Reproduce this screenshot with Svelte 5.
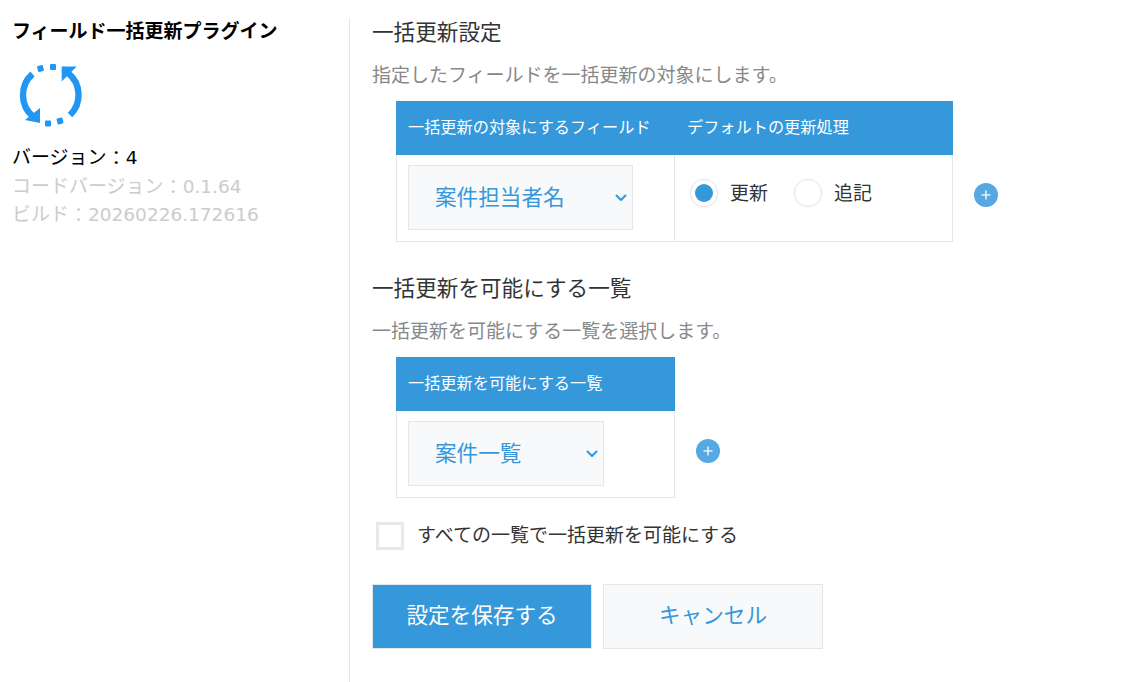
<script>
	// Plugin settings page: field bulk update
	let fieldRows = $state([{ name: '案件担当者名', mode: 'update' }]);
	let allViews = $state(false);
</script>

{#snippet chevron()}
	<svg class="chevron" width="12" height="8" viewBox="0 0 12 8" fill="none" stroke="#3498db" stroke-width="2" stroke-linecap="round" stroke-linejoin="round">
		<path d="M1.5 1.5 6 6l4.5-4.5" />
	</svg>
{/snippet}

{#snippet addButton()}
	<button class="add-btn" aria-label="追加">
		<svg width="24" height="24" viewBox="0 0 24 24">
			<circle cx="12" cy="12" r="12" fill="#55a8e2" />
			<path d="M12 7.5v9M7.5 12h9" stroke="#e4f1fa" stroke-width="1.6" />
		</svg>
	</button>
{/snippet}

<div class="page">
	<aside class="sidebar">
		<h3 class="plugin-name">フィールド一括更新プラグイン</h3>
		<svg class="logo" width="72" height="72" viewBox="14 59 72 72" fill="none">
			<g stroke="#2196f3" stroke-width="6.4">
				<path d="M32.5 74A28 28 0 0 0 33 116.5" />
				<path d="M70 115A28 28 0 0 0 68 73" />
			</g>
			<g fill="#2196f3">
				<path d="M40 108v15l-15-3z" />
				<path d="M61.7 66.5h15l-15 15z" />
				<rect x="37.5" y="65.5" width="6" height="6" rx="1" transform="rotate(-15 40.5 68.5)" />
				<rect x="50" y="64" width="6" height="6" rx="1" />
				<rect x="45" y="120.5" width="6" height="6" rx="1" />
				<rect x="57" y="118" width="6" height="6" rx="1" transform="rotate(-15 60 121)" />
			</g>
		</svg>
		<div class="version">バージョン<span class="colon">：</span><span class="num">4</span></div>
		<div class="version muted">コードバージョン<span class="colon">：</span><span class="num">0.1.64</span></div>
		<div class="version muted">ビルド<span class="colon">：</span><span class="num">20260226.172616</span></div>
	</aside>

	<main class="content">
		<section class="block">
			<h3 class="block-title">一括更新設定</h3>
			<p class="block-desc">指定したフィールドを一括更新の対象にします。</p>
			<div class="table-row">
				<table class="settings">
					<thead>
						<tr>
							<th class="col-field">一括更新の対象にするフィールド</th>
							<th>デフォルトの更新処理</th>
						</tr>
					</thead>
					<tbody>
						{#each fieldRows as row}
							<tr>
								<td class="first">
									<div class="select wide">
										<span>{row.name}</span>
										{@render chevron()}
									</div>
								</td>
								<td class="radio-cell">
									<div class="radios">
										<span class="radio on"></span>
										<span class="radio-label">更新</span>
										<span class="radio"></span>
										<span class="radio-label">追記</span>
									</div>
								</td>
							</tr>
						{/each}
					</tbody>
				</table>
				{@render addButton()}
			</div>
		</section>

		<section class="block">
			<h3 class="block-title">一括更新を可能にする一覧</h3>
			<p class="block-desc">一括更新を可能にする一覧を選択します。</p>
			<div class="table-row">
				<table class="settings narrow">
					<thead>
						<tr><th>一括更新を可能にする一覧</th></tr>
					</thead>
					<tbody>
						<tr>
							<td class="first">
								<div class="select">
									<span>案件一覧</span>
									{@render chevron()}
								</div>
							</td>
						</tr>
					</tbody>
				</table>
				{@render addButton()}
			</div>
		</section>

		<label class="check">
			<span class="box" class:on={allViews}></span>
			<span class="check-label">すべての一覧で一括更新を可能にする</span>
		</label>

		<div class="actions">
			<button class="btn save">設定を保存する</button>
			<button class="btn cancel">キャンセル</button>
		</div>
	</main>
</div>

<style>
	:global(body) {
		background: #fff;
		color: #333;
		font-family: "DejaVu Sans", "Noto Sans CJK JP", sans-serif;
		font-size: 19px;
	}

	.page {
		display: flex;
		box-sizing: border-box;
		min-height: 100vh;
	}

	.sidebar {
		box-sizing: border-box;
		width: 350px;
		margin-top: 18px;
		padding-left: 12px;
		border-right: 1px solid #e3e7e8;
	}

	.plugin-name {
		margin: -1px 0 0;
		color: #000;
		font-size: 19px;
		font-weight: 700;
		line-height: 28px;
	}

	.logo {
		display: block;
		margin: 14px 0 12px 2px;
	}

	.version {
		color: #000;
		line-height: 28.5px;
	}

	.num {
		font-size: 18.5px;
		line-height: 1;
	}

	.colon {
		line-height: 1;
		vertical-align: -1px;
	}

	.muted {
		color: #ccc;
	}

	.content {
		flex: 1;
		padding: 17px 0 0 22px;
	}

	.block {
		margin-bottom: 31px;
	}

	.block-title {
		margin: 0;
		color: #333;
		font-size: 21.6px;
		font-weight: 400;
		line-height: 32px;
	}

	.block-desc {
		margin: 12px 0;
		color: #888;
		line-height: 28px;
	}

	.table-row {
		display: flex;
		align-items: flex-end;
		padding-left: 24px;
	}

	.settings {
		border-collapse: separate;
		border-spacing: 0;
		table-layout: fixed;
		width: 557px;
	}

	.settings.narrow {
		width: 279px;
	}

	.settings th {
		box-sizing: border-box;
		height: 54px;
		padding: 0 12px 5px;
		background: #3498db;
		color: #fff;
		font-size: 16.2px;
		font-weight: 400;
		text-align: left;
		white-space: nowrap;
	}

	.col-field {
		width: 279px;
	}

	.settings td {
		box-sizing: border-box;
		height: 87px;
		padding: 10px 0 0 0;
		border-right: 1px solid #e3e7e8;
		border-bottom: 1px solid #e3e7e8;
		vertical-align: top;
	}

	.settings td.first {
		padding-left: 11px;
		border-left: 1px solid #e3e7e8;
	}

	.select {
		display: flex;
		box-sizing: border-box;
		align-items: center;
		justify-content: space-between;
		width: 196px;
		height: 65px;
		padding: 0 5px 4px 26px;
		border: 1px solid #e3e7e8;
		background: #f7f9fa;
		color: #3498db;
		font-size: 21.6px;
	}

	.select.wide {
		width: 225px;
	}

	.chevron {
		margin-top: 5px;
	}

	.settings td.radio-cell {
		padding: 24px 0 0 15px;
	}

	.radios {
		display: flex;
		align-items: center;
	}

	.radio {
		display: flex;
		box-sizing: border-box;
		align-items: center;
		justify-content: center;
		width: 28px;
		height: 28px;
		border: 1px solid #e3e7e8;
		border-radius: 50%;
		box-shadow: 0 0 2px rgba(0, 0, 0, 0.1);
	}

	.radio.on::after {
		content: '';
		width: 18px;
		height: 18px;
		border-radius: 50%;
		background: #3498db;
	}

	.radio-label {
		margin: 0 26px 0 12px;
		line-height: 26px;
	}

	.add-btn {
		width: 24px;
		height: 24px;
		margin: 0 0 35px 21px;
		padding: 0;
		border: none;
		background: none;
	}

	.add-btn svg {
		display: block;
	}

	.check {
		display: flex;
		align-items: center;
		gap: 13px;
		margin: -7px 0 0 4px;
	}

	.check-label {
		padding-bottom: 2px;
		line-height: 26px;
	}

	.box {
		box-sizing: border-box;
		width: 28px;
		height: 28px;
		border: 3px solid #e8e8e8;
		background: #fff;
	}

	.actions {
		display: flex;
		gap: 11px;
		margin-top: 34px;
	}

	.btn {
		box-sizing: border-box;
		width: 220px;
		height: 65px;
		padding: 0 0 6px;
		border: 1px solid #e3e7e8;
		font-family: inherit;
		font-size: 21.6px;
	}

	.save {
		background: #3498db;
		color: #fff;
	}

	.cancel {
		background: #f7f9fa;
		color: #3498db;
	}
</style>
